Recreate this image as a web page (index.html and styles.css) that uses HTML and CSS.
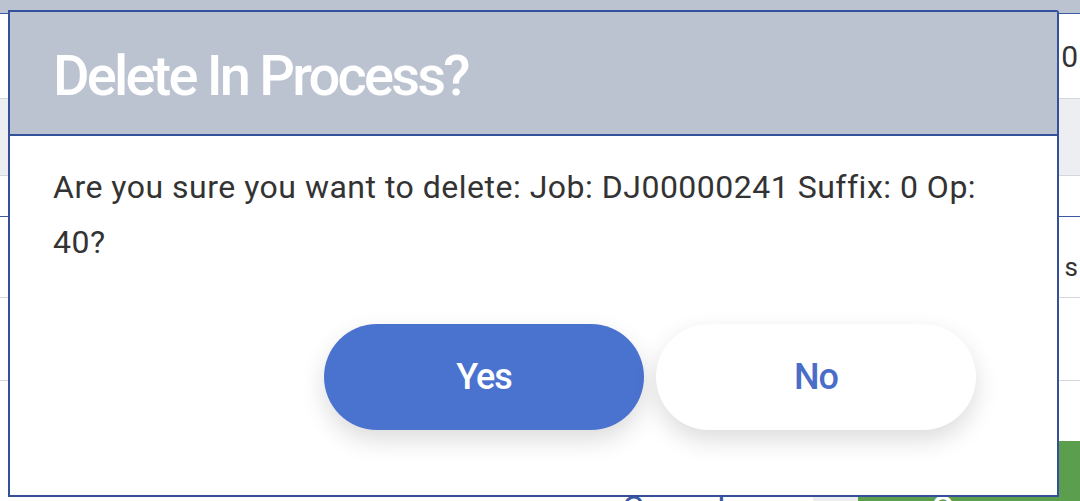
FILE: index.html
```html
<!DOCTYPE html>
<html>
<head>
<meta charset="utf-8">
<link rel="stylesheet" href="styles.css">
</head>
<body>
<div class="page">
  <div class="topbar"></div>
  <div class="row row-a"><span class="cell-text">0</span></div>
  <div class="row row-b"></div>
  <div class="row row-c"></div>
  <div class="row row-d"><span class="cell-text small">s</span></div>
  <div class="row row-e"></div>
  <div class="row row-f"></div>
  <div class="footer">
    <div class="foot-left"></div>
    <div class="foot-cancel"><span class="cancel">Cancel</span></div>
    <div class="foot-gap"></div>
    <div class="foot-save"><span class="save">Save</span></div>
  </div>
</div>

<div class="dialog">
  <div class="dialog-header">
    <h1 class="dialog-title">Delete In Process?</h1>
  </div>
  <div class="dialog-body">
    <p class="dialog-text">Are you sure you want to delete: Job: DJ00000241 Suffix: 0 Op: 40?</p>
    <div class="dialog-actions">
      <button class="btn btn-yes">Yes</button>
      <button class="btn btn-no">No</button>
    </div>
  </div>
</div>
</body>
</html>
```

FILE: styles.css
```css
html, body {
  margin: 0;
  padding: 0;
}
body {
  width: 1080px;
  height: 501px;
  overflow: hidden;
  font-family: Roboto, "Liberation Sans", sans-serif;
  background: #ffffff;
  position: relative;
}

.page {
  display: flex;
  flex-direction: column;
  height: 501px;
  overflow: hidden;
}
.topbar {
  height: 13px;
  background: #bcc3d0;
  border-bottom: 1px solid #3b5aa3;
  flex: none;
}
.row {
  flex: none;
  display: flex;
  justify-content: flex-end;
  align-items: center;
}
.row-a { height: 84px; border-bottom: 1px solid #d4d7dd; background: #fff; }
.row-b { height: 76px; border-bottom: 1px solid #d4d7dd; background: #eceef2; }
.row-c { height: 40px; border-bottom: 1px solid #3b5aa3; background: #fff; }
.row-d { height: 80px; border-bottom: 1px solid #d4d7dd; background: #fff; }
.row-e { height: 82px; border-bottom: 1px solid #d4d7dd; background: #fff; }
.row-f { height: 60px; background: #fff; }
.cell-text {
  font-size: 30px;
  color: #333;
  padding-right: 2px;
}
.cell-text.small { font-size: 26px; padding-top: 20px; }

.footer {
  flex: 1;
  display: flex;
  align-items: stretch;
  background: #fff;
  overflow: hidden;
}
.foot-left {
  width: 600px;
  background: #fff;
}
.foot-cancel {
  width: 213px;
  background: #fff;
  display: flex;
  align-items: flex-end;
  overflow: hidden;
}
.foot-gap {
  width: 45px;
  background: #ebedf0;
}
.foot-save {
  flex: 1;
  background: #5a9e4e;
  display: flex;
  align-items: flex-end;
  justify-content: center;
  overflow: hidden;
}
.cancel {
  font-size: 34px;
  color: #3b5aa3;
  line-height: 1;
  margin-left: 22px;
  margin-bottom: -24px;
}
.save {
  font-size: 34px;
  color: #fff;
  font-weight: 500;
  line-height: 1;
  margin-bottom: -24px;
}

.dialog {
  position: absolute;
  left: 8px;
  top: 10px;
  width: 1047px;
  height: 483px;
  border: 2px solid #34509b;
  background: #ffffff;
  display: flex;
  flex-direction: column;
  border-top-right-radius: 3px;
}
.dialog-header {
  height: 122px;
  background: #bcc3d0;
  border-bottom: 2px solid #34509b;
  display: flex;
  align-items: center;
  padding-left: 43px;
  flex: none;
}
.dialog-title {
  margin: 0;
  font-size: 56px;
  font-weight: 500;
  color: #ffffff;
  letter-spacing: -2.8px;
  line-height: 1;
  padding-top: 6px;
}
.dialog-body {
  flex: 1;
  padding: 24px 43px 0 43px;
  display: flex;
  flex-direction: column;
}
.dialog-text {
  margin: 0;
  font-size: 32px;
  line-height: 55px;
  color: #333333;
  letter-spacing: 0.5px;
}
.dialog-actions {
  display: flex;
  justify-content: flex-end;
  gap: 12px;
  margin-top: 54px;
  padding-right: 38px;
}
.btn {
  width: 320px;
  height: 106px;
  border: none;
  border-radius: 53px;
  font-family: Roboto, "Liberation Sans", sans-serif;
  font-size: 36px;
  font-weight: 500;
  letter-spacing: -1px;
  box-shadow: 0 10px 24px rgba(0, 0, 0, 0.14);
  cursor: pointer;
}
.btn-yes {
  background: #4a72cf;
  color: #ffffff;
}
.btn-no {
  background: #ffffff;
  color: #4a6dc8;
}
```
